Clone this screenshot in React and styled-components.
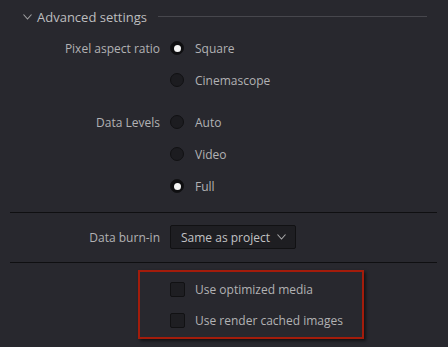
import React from "react";
import styled, { createGlobalStyle } from "styled-components";

const Global = createGlobalStyle`
  html, body { margin: 0; padding: 0; background: #28282e; }
  body { font-family: "Open Sans", "Noto Sans", sans-serif; }
`;

const Page = styled.div`
  width: 448px;
  height: 347px;
  box-sizing: border-box;
  padding: 0 11px 0 10px;
  background: #28282e;
  color: #b2b2b4;
  font-size: 12px;
  overflow: hidden;
`;

const Header = styled.div`
  height: 32px;
  box-sizing: border-box;
  padding: 2px 10px 0 13px;
  display: flex;
  align-items: center;
`;

const HeaderTitle = styled.span`
  margin-left: 5px;
  font-size: 13px;
  color: #bdbdbf;
  white-space: nowrap;
`;

const HeaderLine = styled.div`
  flex: 1;
  height: 1px;
  margin-left: 11px;
  margin-top: -2px;
  background: #47474d;
`;

const Group = styled.div`
  display: grid;
  grid-template-columns: 150px 1fr;
  column-gap: 10px;
  margin-top: ${(p) => p.$gap || 0}px;
`;

const Label = styled.div`
  grid-column: 1;
  height: ${(p) => p.$h || 32}px;
  display: flex;
  align-items: center;
  justify-content: flex-end;
  white-space: nowrap;
`;

const Control = styled.label`
  grid-column: 2;
  height: 32px;
  display: flex;
  align-items: center;
  gap: 11px;
  white-space: nowrap;
`;

const Radio = styled.span`
  width: 14px;
  height: 14px;
  box-sizing: border-box;
  border-radius: 50%;
  border: 1px solid #111113;
  background: ${(p) => (p.$on ? "#0e0e10" : "#1c1c20")};
  display: flex;
  align-items: center;
  justify-content: center;
  &::after {
    content: "";
    display: ${(p) => (p.$on ? "block" : "none")};
    width: 7px;
    height: 7px;
    border-radius: 50%;
    background: #f4f4f4;
  }
`;

const Divider = styled.div`
  height: 1px;
  background: #0f0f11;
  margin-top: ${(p) => p.$top || 0}px;
`;

const BurnRow = styled.div`
  display: grid;
  grid-template-columns: 150px auto;
  column-gap: 10px;
  padding: 12px 0 13px;
  align-items: center;
  justify-content: start;
`;

const Dropdown = styled.div`
  height: 24px;
  box-sizing: border-box;
  width: 126px;
  border: 1px solid #111113;
  border-radius: 2px;
  background: #1e1e22;
  color: #c2c2c4;
  display: flex;
  align-items: center;
  padding-left: 10px;
  gap: 7px;
  white-space: nowrap;
`;

const Highlight = styled.div`
  margin: 7px 0 0 128px;
  width: 226px;
  height: 69px;
  box-sizing: border-box;
  border: 2px solid #a31c0b;
  box-shadow: 2px 2px 3px rgba(0, 0, 0, 0.55);
  padding: 2px 0 0 30px;
`;

const CheckRow = styled.label`
  height: 31px;
  display: flex;
  align-items: center;
  gap: 10px;
  white-space: nowrap;
`;

const Checkbox = styled.span`
  width: 15px;
  height: 15px;
  box-sizing: border-box;
  border: 1px solid #111113;
  border-radius: 2px;
  background: #1e1e22;
`;

const Chevron = ({ w = 9, h = 5, color = "#9a9a9c" }) => (
  <svg width={w} height={h + 1} viewBox={`0 0 ${w} ${h + 1}`} fill="none">
    <path
      d={`M0.5 0.5 L${w / 2} ${h} L${w - 0.5} 0.5`}
      stroke={color}
      strokeWidth="1.1"
    />
  </svg>
);

export default function App() {
  return (
    <Page>
      <Global />
      <Header>
        <Chevron w={9} h={5} color="#a0a0a2" />
        <HeaderTitle>Advanced settings</HeaderTitle>
        <HeaderLine />
      </Header>

      <Group>
        <Label>Pixel aspect ratio</Label>
        <Control>
          <Radio $on />
          Square
        </Control>
        <Control>
          <Radio />
          Cinemascope
        </Control>
      </Group>

      <Group $gap={10}>
        <Label>Data Levels</Label>
        <Control>
          <Radio />
          Auto
        </Control>
        <Control>
          <Radio />
          Video
        </Control>
        <Control>
          <Radio $on />
          Full
        </Control>
      </Group>

      <Divider $top={10} />

      <BurnRow>
        <Label $h={24}>Data burn-in</Label>
        <Dropdown>
          Same as project
          <Chevron w={9} h={5} color="#a8a8aa" />
        </Dropdown>
      </BurnRow>

      <Divider />

      <Highlight>
        <CheckRow>
          <Checkbox />
          Use optimized media
        </CheckRow>
        <CheckRow>
          <Checkbox />
          Use render cached images
        </CheckRow>
      </Highlight>
    </Page>
  );
}
